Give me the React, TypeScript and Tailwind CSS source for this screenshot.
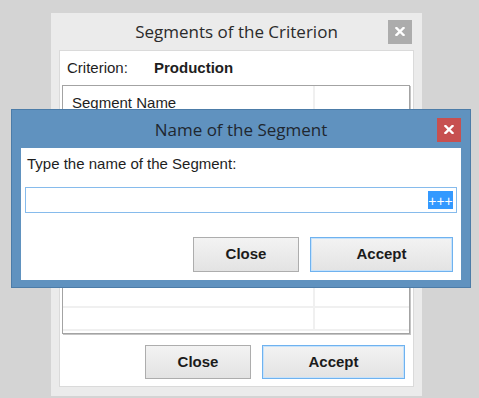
import React from 'react';

const uiFont = { fontFamily: '"Liberation Sans", Arial, sans-serif' };
const titleFont = { fontFamily: '"Open Sans", "Noto Sans", sans-serif' };

function CloseGlyph() {
  return (
    <svg width="10" height="9" viewBox="0 0 10 9" fill="none">
      <path d="M1.5 1L8.5 8M8.5 1L1.5 8" stroke="white" strokeWidth="2.4" strokeLinecap="square" />
    </svg>
  );
}

function DialogButton({ label, primary, wide }: { label: string; primary?: boolean; wide?: boolean }) {
  return (
    <button
      className={
        'flex h-full items-center justify-center border bg-gradient-to-b from-[#f3f3f3] to-[#e3e3e3] text-[15px] font-bold text-[#1b1b1b] ' +
        (primary ? 'border-[#6fb2ef] shadow-[inset_0_0_0_1px_#c6e2fb] ' : 'border-[#adadad] ') +
        (wide ? 'w-[143px]' : 'w-[106px]')
      }
      style={uiFont}
    >
      {label}
    </button>
  );
}

export default function App() {
  const rows = [0, 1, 2, 3, 4, 5, 6, 7];

  return (
    <div className="relative flex h-[398px] w-[479px] overflow-hidden bg-[#d4d4d4] pl-[51px] pt-[13px]">
      {/* Segments of the Criterion */}
      <div className="flex h-[383px] w-[371px] flex-col bg-[#ebebeb]">
        <div className="flex h-[37px] shrink-0 items-center px-[10px]">
          <div className="w-[24px]" />
          <div className="flex-1 text-center text-[17px] text-[#2a2a2a]" style={titleFont}>
            Segments of the Criterion
          </div>
          <div className="flex h-[24px] w-[24px] items-center justify-center bg-[#acacac]">
            <CloseGlyph />
          </div>
        </div>

        <div className="mx-[8px] flex h-[337px] flex-col border border-[#dadada] bg-white" style={uiFont}>
          <div className="flex pl-[7px] pt-[8px] text-[15px] leading-[17px] text-[#1e1e1e]">
            <span className="w-[87px]">Criterion:</span>
            <span className="font-bold">Production</span>
          </div>

          {/* table */}
          <div className="ml-[2px] mt-[9px] flex h-[249px] w-[348px] flex-col border border-[#a3a3a3] shadow-[1px_1px_0_#c4c4c4]">
            <div className="flex h-[30px] border-b-2 border-[#f0f0f0] text-[15px] leading-[17px] text-[#1e1e1e]">
              <div className="w-[252px] border-r-2 border-[#f0f0f0] pl-[9px] pt-[8px]">Segment Name</div>
              <div className="flex-1" />
            </div>
            <div className="flex flex-1 flex-col justify-end overflow-hidden pb-[2px]">
              {rows.map((r) => (
                <div key={r} className="flex h-[23px] shrink-0 border-b-2 border-[#f0f0f0]">
                  <div className="w-[252px] border-r-2 border-[#f0f0f0]" />
                  <div className="flex-1" />
                </div>
              ))}
            </div>
          </div>

          <div className="mr-[8px] mt-[11px] flex h-[34px] justify-end gap-[11px]">
            <DialogButton label="Close" />
            <DialogButton label="Accept" primary wide />
          </div>
        </div>
      </div>

      {/* Name of the Segment (modal on top) */}
      <div className="absolute left-[11px] top-[109px] flex h-[179px] w-[460px] flex-col border border-[#4c7ca8] bg-[#6092bf] px-[9px] pb-[7px]">
        <div className="flex h-[38px] shrink-0 items-center pt-[1px]">
          <div className="w-[24px]" />
          <div className="flex-1 text-center text-[17px] text-[#1f2730]" style={titleFont}>
            Name of the Segment
          </div>
          <div className="flex h-[24px] w-[24px] items-center justify-center bg-[#c75050]">
            <CloseGlyph />
          </div>
        </div>

        <div className="flex h-[132px] flex-col bg-white" style={uiFont}>
          <div className="pl-[6px] pt-[7px] text-[15px] leading-[17px] text-[#1e1e1e]">
            Type the name of the Segment:
          </div>
          <div className="mx-[4px] mt-[15px] flex h-[26px] items-center justify-end border border-[#86bbec] pr-[3px]">
            <span className="flex h-[18px] w-[25px] items-center justify-center bg-[#3399ff] pt-[1px] text-[14px] leading-none text-white">
              +++
            </span>
          </div>
          <div className="mr-[8px] mt-[24px] flex h-[35px] justify-end gap-[11px]">
            <DialogButton label="Close" />
            <DialogButton label="Accept" primary wide />
          </div>
        </div>
      </div>
    </div>
  );
}
